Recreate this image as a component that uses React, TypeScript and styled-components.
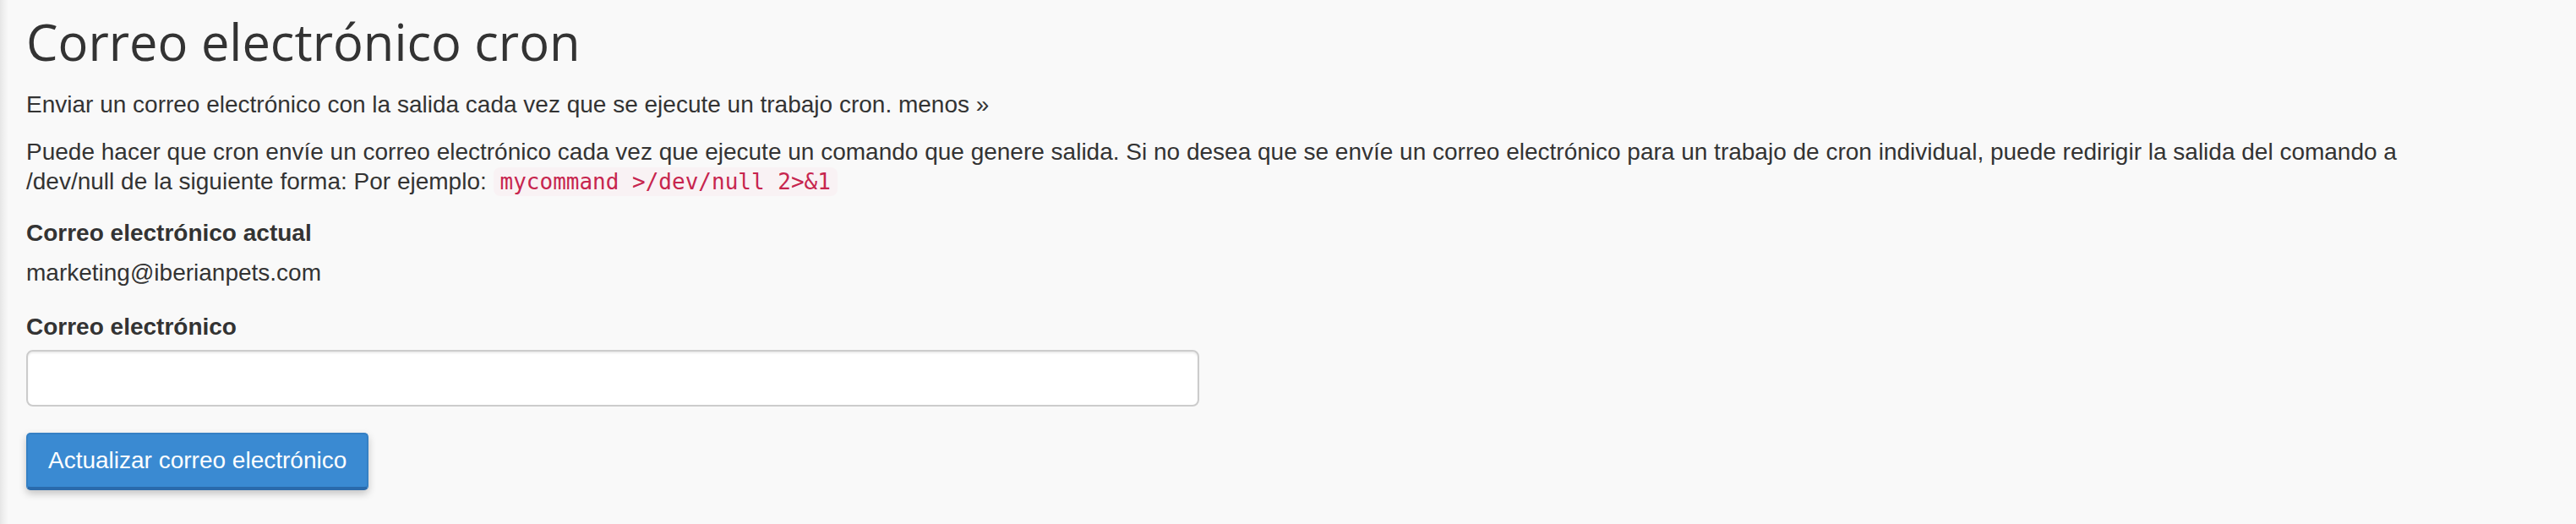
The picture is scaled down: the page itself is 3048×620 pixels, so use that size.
import React from "react";
import styled, { createGlobalStyle } from "styled-components";

const GlobalStyle = createGlobalStyle`
  html, body {
    margin: 0;
    padding: 0;
    background: #f9f9f9;
  }
  body {
    font-family: "Liberation Sans", Arial, Helvetica, sans-serif;
    color: #333333;
  }
`;

const Page = styled.div`
  min-height: 620px;
  box-sizing: border-box;
  padding: 14px 158px 0 31px;
  background: linear-gradient(to right, #e6e6e6 0px, #efefef 4px, #f9f9f9 10px);
`;

const Title = styled.h1`
  margin: 0;
  font-family: "Open Sans", "Liberation Sans", sans-serif;
  font-weight: 400;
  font-size: 59.6px;
  line-height: 70px;
  color: #333333;
`;

const Text = styled.p<{ $top: number }>`
  margin: ${(p) => p.$top}px 0 0;
  font-size: 28px;
  line-height: 35px;
  color: #333333;
`;

const Code = styled.code`
  font-family: "DejaVu Sans Mono", "Liberation Mono", monospace;
  font-size: 26px;
  color: #c7254e;
  background: #f9f2f4;
  border-radius: 8px;
  padding: 2px 8px;
`;

const Label = styled.div<{ $top: number }>`
  margin-top: ${(p) => p.$top}px;
  font-size: 28px;
  line-height: 35px;
  font-weight: 700;
  color: #333333;
`;

const Value = styled.div`
  margin-top: 12px;
  font-size: 28px;
  line-height: 35px;
  color: #333333;
`;

const Input = styled.input`
  display: block;
  box-sizing: border-box;
  margin-top: 10px;
  width: 1388px;
  height: 67px;
  border: 2px solid #cccccc;
  border-radius: 8px;
  background: #ffffff;
  box-shadow: inset 0 2px 2px rgba(0, 0, 0, 0.075);
  font-family: "Liberation Sans", Arial, sans-serif;
  font-size: 28px;
  padding: 0 24px;
  outline: none;
`;

const Button = styled.button`
  display: block;
  box-sizing: border-box;
  margin-top: 31px;
  height: 68px;
  padding: 0 24px;
  border: 2px solid #3580c4;
  border-bottom: 4px solid #2a6aab;
  border-radius: 5px;
  background: #3a8ad2;
  color: #ffffff;
  font-family: "Liberation Sans", Arial, sans-serif;
  font-size: 28px;
  line-height: 1;
  box-shadow: 0 4px 10px rgba(0, 0, 0, 0.22);
  cursor: pointer;
`;

export default function App() {
  return (
    <>
      <GlobalStyle />
      <Page>
        <Title>Correo electrónico cron</Title>
        <Text $top={22}>
          Enviar un correo electrónico con la salida cada vez que se ejecute un trabajo cron. menos »
        </Text>
        <Text $top={21}>
          Puede hacer que cron envíe un correo electrónico cada vez que ejecute un comando que genere salida. Si no desea que se envíe un correo electrónico para un trabajo de cron individual, puede redirigir la salida del comando a /dev/null de la siguiente forma: Por ejemplo:{" "}
          <Code>mycommand &gt;/dev/null 2&gt;&amp;1</Code>
        </Text>
        <Label $top={25}>Correo electrónico actual</Label>
        <Value>marketing@iberianpets.com</Value>
        <Label $top={29}>Correo electrónico</Label>
        <Input type="text" aria-label="Correo electrónico" />
        <Button type="button">Actualizar correo electrónico</Button>
      </Page>
    </>
  );
}
